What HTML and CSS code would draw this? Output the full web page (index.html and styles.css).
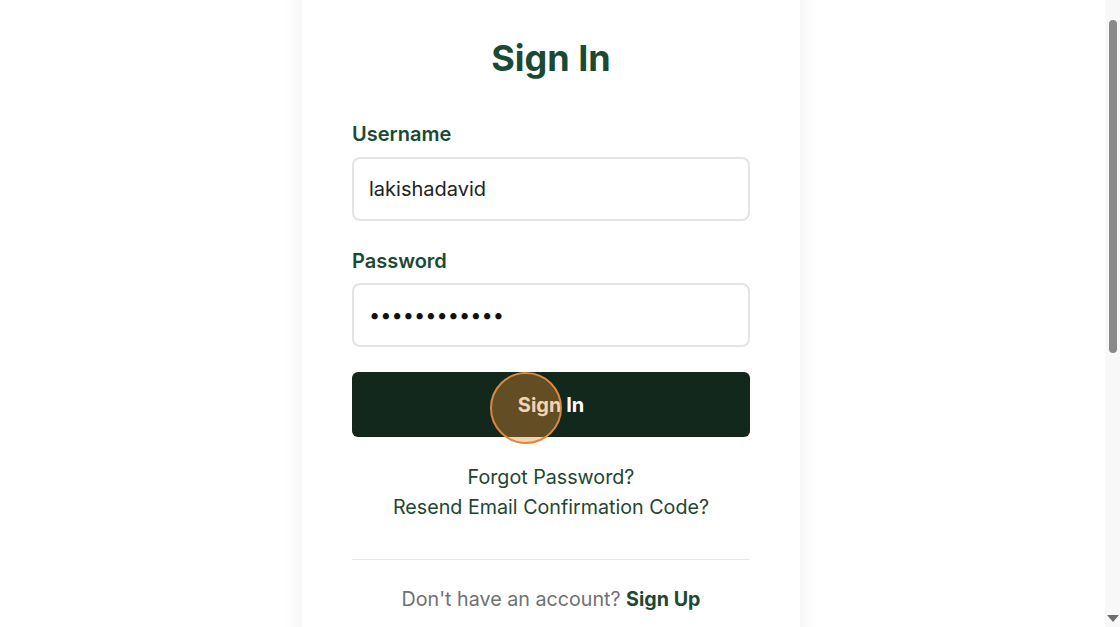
FILE: index.html
```html
<!DOCTYPE html>
<html>
<head>
<meta charset="utf-8">
<link rel="stylesheet" href="styles.css">
</head>
<body>
<div class="page">
  <div class="card">
    <h1 class="title">Sign In</h1>
    <form class="form">
      <div class="field">
        <label class="label">Username</label>
        <div class="input">lakishadavid</div>
      </div>
      <div class="field">
        <label class="label">Password</label>
        <div class="input dots">••••••••••••</div>
      </div>
      <div class="btn-wrap">
        <button type="button" class="btn">Sign In</button>
        <span class="click"></span>
      </div>
    </form>
    <div class="links">
      <a class="link">Forgot Password?</a>
      <a class="link">Resend Email Confirmation Code?</a>
    </div>
    <hr class="divider">
    <p class="signup">Don't have an account? <a class="signup-link">Sign Up</a></p>
  </div>
</div>
<div class="scrollbar">
  <div class="thumb"></div>
  <div class="arrow"></div>
</div>
</body>
</html>
```
FILE: styles.css
```css
* { box-sizing: border-box; }
html, body { margin: 0; padding: 0; height: 100%; overflow: hidden; background: #fff; }
body { font-family: Inter, "Noto Sans", sans-serif; }
.page {
  width: 1102px;
  display: flex;
  justify-content: center;
}
.card {
  width: 498px;
  margin-top: -20px;
  padding: 50px 50px 40px;
  background: #fff;
  box-shadow: 0 0 18px rgba(0,0,0,0.08);
  display: flex;
  flex-direction: column;
}
.title {
  margin: 0 0 36px;
  text-align: center;
  font-size: 36px;
  font-weight: 700;
  line-height: 56px;
  color: #1b4a33;
}
.form { display: flex; flex-direction: column; }
.field { display: flex; flex-direction: column; margin-bottom: 28px; }
.field + .field { margin-bottom: 25px; }
.label {
  font-size: 20px;
  font-weight: 600;
  color: #1b4a33;
  line-height: 24px;
  margin-bottom: 11px;
}
.field + .field .label { margin-bottom: 10px; }
.input {
  height: 64px;
  border: 2px solid #e4e4e4;
  border-radius: 8px;
  padding: 0 15px;
  display: flex;
  align-items: center;
  font-size: 20px;
  color: #222;
}
.dots { font-size: 20px; letter-spacing: 0; color: #111; }
.btn-wrap { position: relative; }
.btn {
  width: 100%;
  height: 65px;
  border: 0;
  border-radius: 6px;
  background: #12281d;
  color: #fff;
  font-family: inherit;
  font-size: 20px;
  font-weight: 700;
}
.click {
  position: absolute;
  left: 138px;
  top: 0;
  width: 72px;
  height: 72px;
  border-radius: 50%;
  background: rgba(230, 140, 50, 0.38);
  border: 2px solid #d98a3c;
}
.links {
  margin-top: 25px;
  display: flex;
  flex-direction: column;
  align-items: center;
}
.link {
  font-size: 19.7px;
  line-height: 30px;
  color: #1e4631;
}
.divider {
  width: 100%;
  margin: 37px 0 0;
  border: 0;
  border-top: 1px solid #e6e6e6;
}
.signup {
  margin: 26px 0 0;
  text-align: center;
  font-size: 19.7px;
  line-height: 26px;
  color: #707070;
}
.signup-link { font-weight: 700; color: #1b4a33; }
.scrollbar {
  position: fixed;
  right: 0;
  top: 0;
  width: 15px;
  height: 100%;
  background: #f8f8f8;
}
.thumb {
  position: absolute;
  left: 4px;
  top: 20px;
  width: 8px;
  height: 333px;
  border-radius: 4px;
  background: #8a8a8a;
}
.arrow {
  position: absolute;
  left: 2px;
  bottom: 5px;
  width: 0;
  height: 0;
  border-left: 6px solid transparent;
  border-right: 6px solid transparent;
  border-top: 7px solid #6e6e6e;
}
```
